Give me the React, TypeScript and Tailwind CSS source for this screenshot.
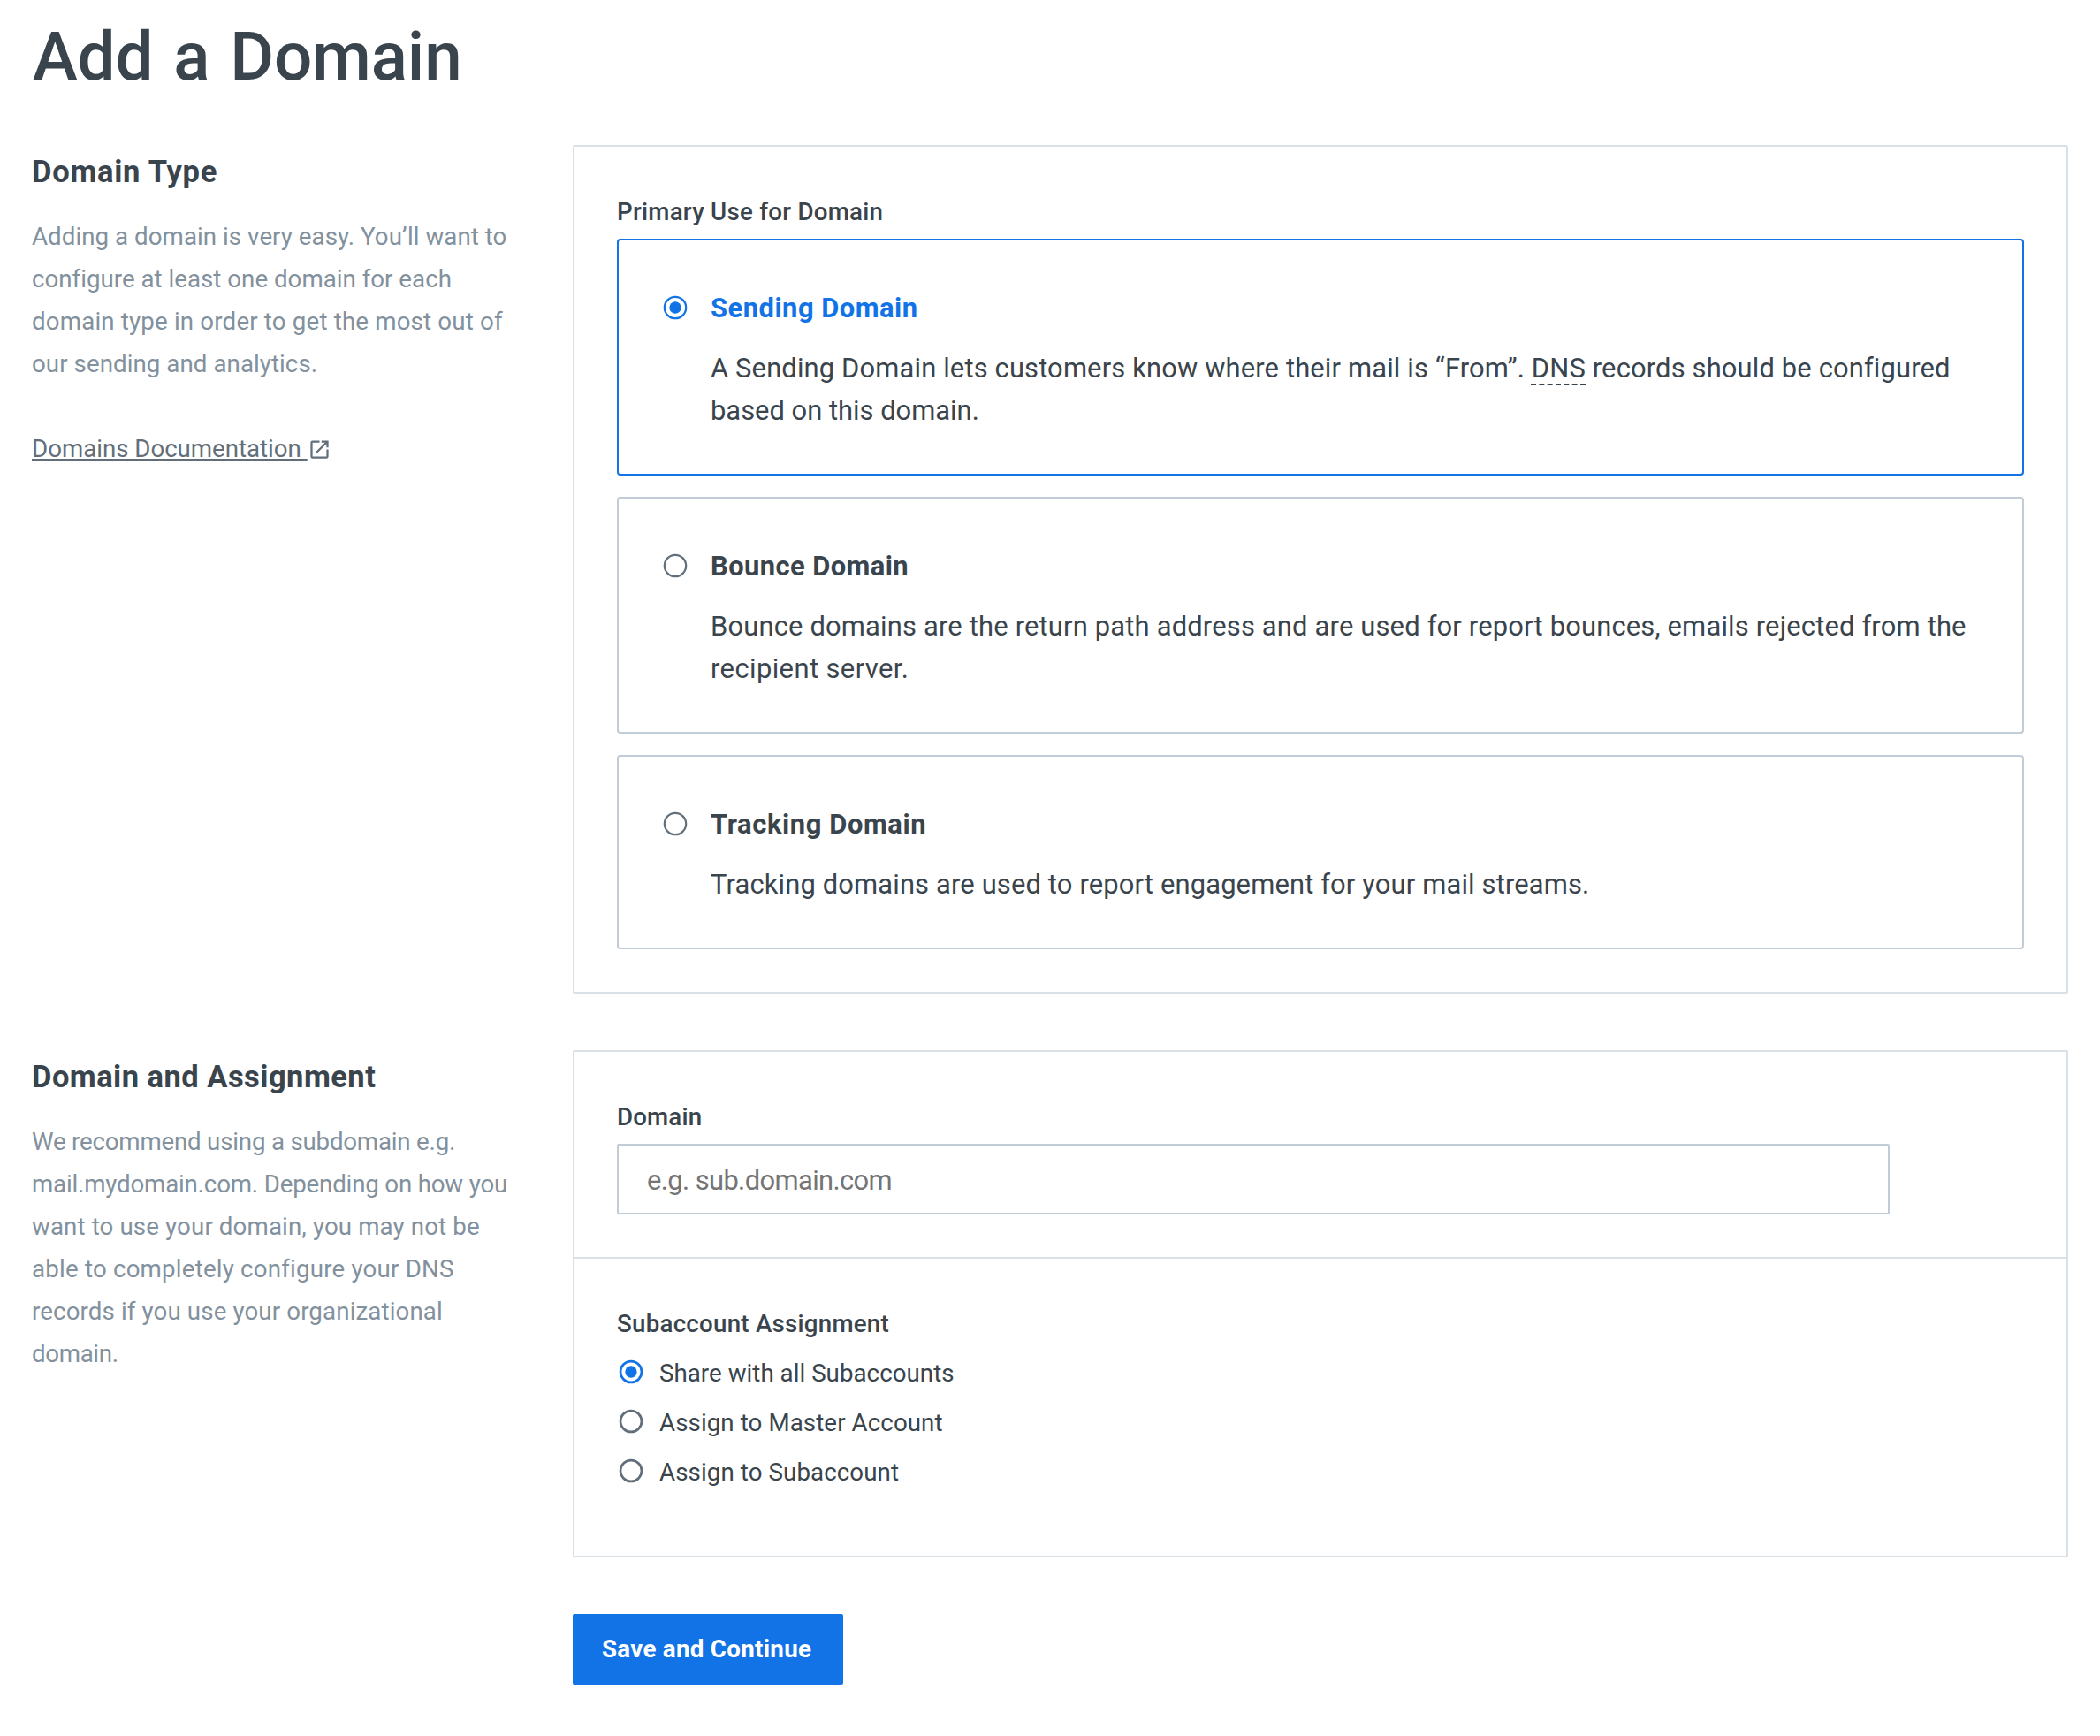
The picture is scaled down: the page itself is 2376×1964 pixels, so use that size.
import type { ReactNode } from "react";

function Radio({ checked, thin, className }: { checked?: boolean; thin?: boolean; className: string }) {
  const color = checked ? "#1273e6" : "#626f7a";
  const stroke = thin ? 2.2 : 2.7;
  return (
    <svg viewBox="0 0 32 32" className={`size-8 shrink-0 ${className}`} fill="none" aria-hidden="true">
      <circle cx="16" cy="16" r={13.3 - stroke / 2} stroke={color} strokeWidth={stroke} />
      {checked && <circle cx="16" cy="16" r="6.67" fill={color} />}
    </svg>
  );
}

function Line({ className, children }: { className: string; children: ReactNode }) {
  return <span className={`block whitespace-nowrap ${className}`}>{children}</span>;
}

function Section({ title, aside, children }: { title: ReactNode; aside: ReactNode; children: ReactNode }) {
  return (
    <section className="flex">
      <div className="w-[612px] shrink-0 pt-1.5">
        {title}
        <div className="mt-[26px] text-[27.7px] leading-[48px] text-[#82919d]">{aside}</div>
      </div>
      <div className="flex-1 rounded-[2px] border-2 border-[#d9e0e6]">{children}</div>
    </section>
  );
}

function Label({ className, children }: { className: string; children: ReactNode }) {
  return (
    <div className={`whitespace-nowrap text-[27.7px] leading-10 font-medium ${className}`}>{children}</div>
  );
}

function Card({
  checked,
  title,
  titleClass,
  heightClass,
  children,
}: {
  checked?: boolean;
  title: string;
  titleClass: string;
  heightClass: string;
  children: ReactNode;
}) {
  return (
    <label
      className={`flex rounded-[4px] border-2 px-12 ${heightClass} ${
        checked ? "border-[#1273e6]" : "border-[#c1ccd6]"
      }`}
    >
      <Radio checked={checked} thin className="mt-[60px]" />
      <div className="pt-[53px] pl-6 text-[30.9px] leading-[48px]">
        <div className={`mb-5 font-bold whitespace-nowrap ${titleClass} ${checked ? "text-[#1273e6]" : ""}`}>
          {title}
        </div>
        {children}
      </div>
    </label>
  );
}

function Option({ checked, className, children }: { checked?: boolean; className: string; children: ReactNode }) {
  return (
    <label className="flex h-14">
      <Radio checked={checked} className="mt-2.5" />
      <span className={`pl-4 text-[27.7px] leading-[56px] whitespace-nowrap ${className}`}>{children}</span>
    </label>
  );
}

export default function App() {
  return (
    <main className="min-h-[1964px] w-[2376px] bg-white px-9 font-['Roboto',sans-serif] text-[#39444d]">
      <h1 className="h-[164px] pt-4 pl-px text-[76.4px] leading-[96px] font-medium tracking-[-0.1px] [word-spacing:4px]">
        Add a Domain
      </h1>

      <div className="flex flex-col gap-16">
        <Section
          title={<h2 className="text-[34.5px] leading-[48px] font-bold tracking-[0.75px]">Domain Type</h2>}
          aside={
            <>
              <p>
                <Line className="tracking-[0.048px]">Adding a domain is very easy. You’ll want to</Line>
                <Line className="tracking-[0.01px]">configure at least one domain for each</Line>
                <Line className="tracking-[0.172px]">domain type in order to get the most out of</Line>
                <Line className="tracking-[0.06px]">our sending and analytics.</Line>
              </p>
              <a className="mt-12 flex text-[#626f7a]">
                <span className="tracking-[-0.03px] whitespace-pre underline decoration-2 underline-offset-[2px]">
                  {"Domains Documentation "}
                </span>
                <svg viewBox="0 0 24 24" className="mt-[11px] size-[27px]" fill="currentColor" aria-hidden="true">
                  <path d="M19 19H5V5h7V3H5a2 2 0 0 0-2 2v14a2 2 0 0 0 2 2h14c1.1 0 2-.9 2-2v-7h-2v7zM14 3v2h3.59l-9.83 9.83 1.41 1.41L19 6.41V10h2V3h-7z" />
                </svg>
              </a>
            </>
          }
        >
          <div className="px-12 pt-[54px] pb-12">
            <Label className="mb-2.5 tracking-[0.26px]">Primary Use for Domain</Label>
            <div className="flex flex-col gap-6">
              <Card checked title="Sending Domain" titleClass="tracking-[0.5px]" heightClass="h-[268px]">
                <Line className="tracking-[0.152px]">
                  A Sending Domain lets customers know where their mail is “From”.{" "}
                  <span className="relative">
                    DNS
                    <svg
                      className="absolute top-[36px] left-[-1px] h-0.5 w-[62px]"
                      viewBox="0 0 62 2"
                      aria-hidden="true"
                    >
                      <path d="M0 1H62" stroke="#39444d" strokeWidth="2" strokeDasharray="6 3.333" />
                    </svg>
                  </span>{" "}
                  records should be configured
                </Line>
                <Line className="tracking-[0px]">based on this domain.</Line>
              </Card>
              <Card title="Bounce Domain" titleClass="tracking-[0.43px]" heightClass="h-[268px]">
                <Line className="tracking-[0.182px]">
                  Bounce domains are the return path address and are used for report bounces, emails rejected from the
                </Line>
                <Line className="tracking-[0.42px]">recipient server.</Line>
              </Card>
              <Card title="Tracking Domain" titleClass="tracking-[0.6px]" heightClass="h-[220px]">
                <Line className="tracking-[0.15px]">
                  Tracking domains are used to report engagement for your mail streams.
                </Line>
              </Card>
            </div>
          </div>
        </Section>

        <Section
          title={
            <h2 className="text-[34.5px] leading-[48px] font-bold tracking-[0.47px]">Domain and Assignment</h2>
          }
          aside={
            <p>
              <Line className="tracking-[-0.206px]">We recommend using a subdomain e.g.</Line>
              <Line className="tracking-[-0.181px]">mail.mydomain.com. Depending on how you</Line>
              <Line className="tracking-[0.12px]">want to use your domain, you may not be</Line>
              <Line className="tracking-[0.2px]">able to completely configure your DNS</Line>
              <Line className="tracking-[0.12px]">records if you use your organizational</Line>
              <Line className="tracking-[-0.35px]">domain.</Line>
            </p>
          }
        >
          <div className="border-b-2 border-[#d9e0e6] px-12 pt-[54px] pb-12">
            <Label className="mb-2.5 tracking-[0.15px]">Domain</Label>
            <input
              type="text"
              placeholder="e.g. sub.domain.com"
              className="block h-20 w-[1440px] rounded-[2px] border-2 border-[#c1ccd6] pt-[2px] pl-8 text-[30.9px] tracking-[-0.61px] placeholder:text-[#757575]"
            />
          </div>
          <div className="px-12 pt-[54px] pb-[66px]">
            <Label className="mb-2 tracking-[0.247px]">Subaccount Assignment</Label>
            <Option checked className="tracking-[0.04px]">
              Share with all Subaccounts
            </Option>
            <Option className="tracking-[0.09px]">Assign to Master Account</Option>
            <Option className="tracking-[0.097px]">Assign to Subaccount</Option>
          </div>
        </Section>

        <button className="ml-[612px] h-20 w-[306px] rounded-[2px] bg-[#1273e6] pl-[33px] text-left text-[27.7px] leading-[80px] font-bold tracking-[0.3px] whitespace-nowrap text-white">
          Save and Continue
        </button>
      </div>
    </main>
  );
}
